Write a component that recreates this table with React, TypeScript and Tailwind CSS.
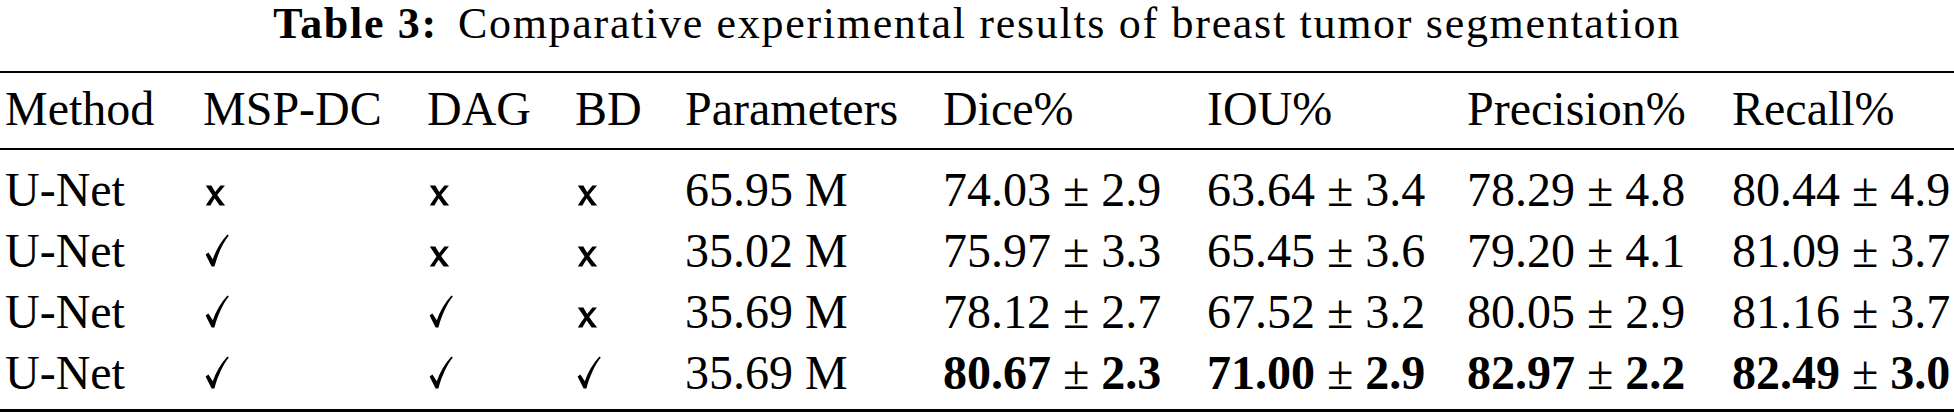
import React from "react";

const Check = () => (
  <svg width="24" height="33" viewBox="0 0 24 33" className="inline-block align-baseline">
    <path d="M0.6 20.4 L3.4 18.4 L7.8 25.2 C11 16 15.6 7.8 22.4 0.4 L23.8 1.6 C17.6 9.4 13.2 19.4 9.4 32.4 L6.6 32.4 Z" fill="#000" />
  </svg>
);

const Cross = () => (
  <svg width="21" height="21" viewBox="0 0 21 21" className="inline-block align-baseline">
    <path d="M0.8 0.6 L6.4 0.6 C9.4 6 13.6 12.8 20.2 20.4 L14.6 20.4 C10.8 15.2 5.4 7.6 0.8 0.6 Z" fill="#000" />
    <path d="M15.4 0.6 L20 0.6 C14.6 6.8 9.8 12.8 5.4 20.4 L0.8 20.4 C5.6 12.8 10.6 6.6 15.4 0.6 Z" fill="#000" />
  </svg>
);

type Row = {
  msp: boolean;
  dag: boolean;
  bd: boolean;
  params: string;
  vals: [string, string][];
  bold?: boolean;
};

const rows: Row[] = [
  { msp: false, dag: false, bd: false, params: "65.95 M", vals: [["74.03", "2.9"], ["63.64", "3.4"], ["78.29", "4.8"], ["80.44", "4.9"]] },
  { msp: true, dag: false, bd: false, params: "35.02 M", vals: [["75.97", "3.3"], ["65.45", "3.6"], ["79.20", "4.1"], ["81.09", "3.7"]] },
  { msp: true, dag: true, bd: false, params: "35.69 M", vals: [["78.12", "2.7"], ["67.52", "3.2"], ["80.05", "2.9"], ["81.16", "3.7"]] },
  { msp: true, dag: true, bd: true, params: "35.69 M", vals: [["80.67", "2.3"], ["71.00", "2.9"], ["82.97", "2.2"], ["82.49", "3.0"]], bold: true },
];

const grid =
  "grid grid-cols-[198px_224px_148px_110px_258px_264px_260px_265px_1fr] pl-[5px] whitespace-nowrap";

export default function App() {
  return (
    <div className="w-[1954px] h-[412px] bg-white text-black font-['Liberation_Serif',serif] overflow-hidden">
      <div className="text-center text-[44px] leading-[48px] tracking-[1.7px] whitespace-nowrap">
        <span className="font-bold">Table 3:</span>
        <span className="ml-[20px]">Comparative experimental results of breast tumor segmentation</span>
      </div>
      <div className="mt-[23px] border-t-2 border-black" />
      <div className={`${grid} text-[48px] leading-[61px] pt-[5px] pb-[9px]`}>
        <div>Method</div>
        <div>MSP-DC</div>
        <div>DAG</div>
        <div>BD</div>
        <div>Parameters</div>
        <div>Dice%</div>
        <div>IOU%</div>
        <div>Precision%</div>
        <div>Recall%</div>
      </div>
      <div className="border-t-2 border-black" />
      <div className="pt-[9px] pb-[6px]">
        {rows.map((r, i) => (
          <div key={i} className={`${grid} text-[48px] leading-[61px]`}>
            <div>U-Net</div>
            <div className="pl-[2px]">{r.msp ? <Check /> : <Cross />}</div>
            <div className="pl-[2px]">{r.dag ? <Check /> : <Cross />}</div>
            <div className="pl-[2px]">{r.bd ? <Check /> : <Cross />}</div>
            <div>{r.params}</div>
            {r.vals.map(([a, b], j) => (
              <div key={j}>
                {r.bold ? (
                  <>
                    <span className="font-bold">{a}</span> ± <span className="font-bold">{b}</span>
                  </>
                ) : (
                  <>
                    {a} ± {b}
                  </>
                )}
              </div>
            ))}
          </div>
        ))}
      </div>
      <div className="border-t-[3px] border-black" />
    </div>
  );
}
